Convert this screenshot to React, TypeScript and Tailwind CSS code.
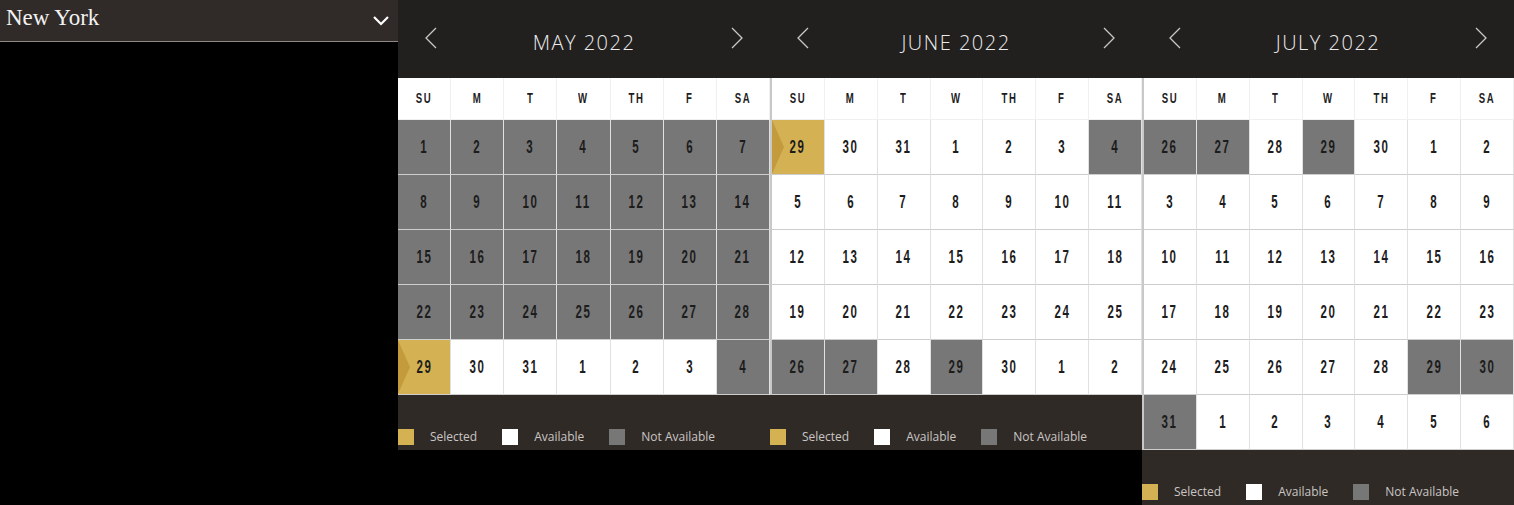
import React from "react";

type Status = "sel" | "ok" | "na";
type Day = [number, Status];

const DAYS = ["SU", "M", "T", "W", "TH", "F", "SA"];

const row = (nums: number[], na: number[] = [], sel: number[] = []): Day[] =>
  nums.map((n, i) => [n, sel.includes(i) ? "sel" : na.includes(i) ? "na" : "ok"]);

const all = [0, 1, 2, 3, 4, 5, 6];
const seq = (a: number) => [a, a + 1, a + 2, a + 3, a + 4, a + 5, a + 6];

const months: { title: string; border: boolean; rows: Day[][] }[] = [
  {
    title: "MAY 2022",
    border: false,
    rows: [
      row(seq(1), all),
      row(seq(8), all),
      row(seq(15), all),
      row(seq(22), all),
      row([29, 30, 31, 1, 2, 3, 4], [6], [0]),
    ],
  },
  {
    title: "JUNE 2022",
    border: true,
    rows: [
      row([29, 30, 31, 1, 2, 3, 4], [6], [0]),
      row(seq(5)),
      row(seq(12)),
      row(seq(19)),
      row([26, 27, 28, 29, 30, 1, 2], [0, 1, 3]),
    ],
  },
  {
    title: "JULY 2022",
    border: true,
    rows: [
      row([26, 27, 28, 29, 30, 1, 2], [0, 1, 3]),
      row(seq(3)),
      row(seq(10)),
      row(seq(17)),
      row([24, 25, 26, 27, 28, 29, 30], [5, 6]),
      row([31, 1, 2, 3, 4, 5, 6], [0]),
    ],
  },
];

const Chevron = ({ dir }: { dir: "l" | "r" }) => (
  <svg width="12" height="22" viewBox="0 0 12 22" fill="none" stroke="#c8c8c8" strokeWidth="1.3">
    {dir === "l" ? <path d="M11 1 L1 11 L11 21" /> : <path d="M1 1 L11 11 L1 21" />}
  </svg>
);

// condensed look: Liberation Sans bold squeezed horizontally
const Narrow = ({ children, size }: { children: React.ReactNode; size: string }) => (
  <span
    className={`inline-block scale-x-[0.64] font-['Liberation_Sans'] font-bold tracking-[2.5px] text-[#1c1c1c] ${size}`}
  >
    {children}
  </span>
);

const Cell = ({ d }: { d: Day }) => {
  const [n, s] = d;
  const bg = s === "sel" ? "bg-[#d4b254]" : s === "na" ? "bg-[#777777]" : "bg-white";
  return (
    <div
      className={`relative h-[55px] flex items-center justify-center border-r border-b border-r-[#e0e0e0] border-b-[#cdcdcd] ${bg}`}
    >
      {s === "sel" && (
        <svg className="absolute left-0 top-0" width="12" height="54" viewBox="0 0 12 54">
          <polygon points="0,0 12,27 0,54" fill="#c39a3c" />
        </svg>
      )}
      <Narrow size="text-[18px]">{n}</Narrow>
    </div>
  );
};

const Legend = () => (
  <div className="h-[55px] bg-[#302a27] flex items-end pb-[5px] font-['Open_Sans'] text-[12px] text-[#c9c6c3]">
    <span className="w-4 h-4 bg-[#d4b254]" />
    <span className="ml-4 mr-[25px] leading-4">Selected</span>
    <span className="w-4 h-4 bg-white" />
    <span className="ml-4 mr-[25px] leading-4">Available</span>
    <span className="w-4 h-4 bg-[#777777]" />
    <span className="ml-4 leading-4">Not Available</span>
  </div>
);

const Month = ({ m }: { m: (typeof months)[number] }) => (
  <div className="w-[372px] flex flex-col">
    <div className="h-[78px] bg-[#221f1f] flex items-center justify-between px-[27px] pb-[2px]">
      <Chevron dir="l" />
      <span className="font-['Open_Sans'] font-light text-[20px] tracking-[1.5px] text-[#ececec] mt-[10px]">
        {m.title}
      </span>
      <Chevron dir="r" />
    </div>
    <div className={m.border ? "border-l-2 border-[#c8c8c8]" : ""}>
      <div className="grid grid-cols-7 bg-white">
        {DAYS.map((d) => (
          <div
            key={d}
            className="h-[42px] flex items-center justify-center border-r border-b border-[#f0f0f0]"
          >
            <Narrow size="text-[15px]">{d}</Narrow>
          </div>
        ))}
      </div>
      <div className="grid grid-cols-7">
        {m.rows.flat().map((d, i) => (
          <Cell key={i} d={d} />
        ))}
      </div>
    </div>
    <Legend />
  </div>
);

export default function App() {
  return (
    <div className="w-[1514px] h-[505px] bg-black flex items-start overflow-hidden">
      <div className="w-[398px]">
        <div className="h-[42px] bg-[#302b28] border-b border-[#8d8884] flex items-center justify-between pl-[6px] pr-[8px]">
          <span className="font-['Liberation_Serif'] text-[23px] text-[#f2f2f2] leading-none -mt-[6px]">
            New York
          </span>
          <svg width="18" height="12" viewBox="0 0 18 12" fill="none" stroke="white" strokeWidth="2.2">
            <path d="M2 2 L9 9 L16 2" />
          </svg>
        </div>
      </div>
      {months.map((m) => (
        <Month key={m.title} m={m} />
      ))}
    </div>
  );
}
